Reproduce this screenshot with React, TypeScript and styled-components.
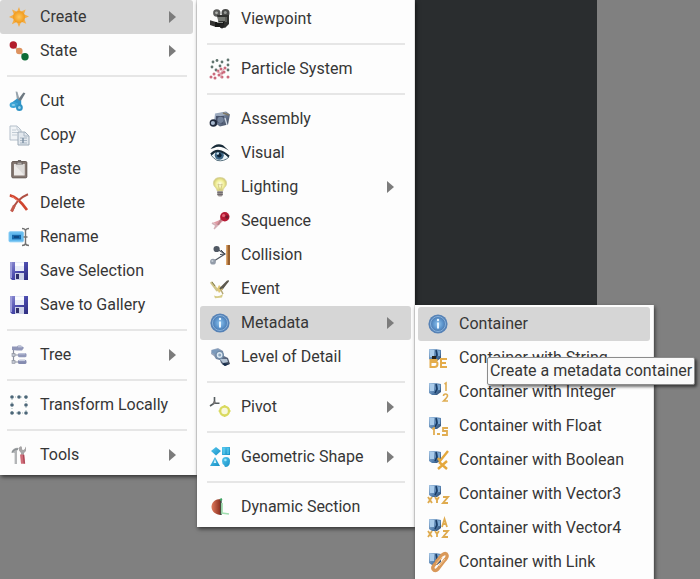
import React from "react";
import styled, { createGlobalStyle, css } from "styled-components";

const GlobalStyle = createGlobalStyle`
  *, *::before, *::after { box-sizing: border-box; }
  body {
    margin: 0;
    background: #808080;
    font-family: Roboto, "Liberation Sans", sans-serif;
    color: #363636;
  }
`;

const Desktop = styled.main`
  position: relative;
  display: flex;
  align-items: flex-start;
  height: 100vh;
  overflow: hidden;
  background: #808080;
`;

const Viewport = styled.div`
  position: absolute;
  top: 0;
  left: 0;
  width: 597px;
  height: 306px;
  background: #2a2d2f;
`;

const MenuPanel = styled.div<{ $edge?: boolean; $level: number }>`
  position: relative;
  z-index: ${(p) => p.$level};
  flex: none;
  display: flex;
  flex-direction: column;
  min-width: ${(p) => (p.$edge ? 197 : p.$level === 2 ? 218 : 239)}px;
  padding: ${(p) => (p.$edge ? "0 3px 3px 0" : "2px 3px 3px")};
  margin-top: ${(p) => (p.$level === 3 ? 305 : 0)}px;
  background: #fdfdfd;
  border-right: 1px solid #e4e4e4;
  box-shadow: 1px 2px 4px rgba(0, 0, 0, 0.6);
`;

const Item = styled.button<{ $active?: boolean; $edge?: boolean }>`
  display: flex;
  align-items: center;
  gap: 11px;
  width: 100%;
  height: 34px;
  padding: 0 17px 0 ${(p) => (p.$edge ? 9 : 10)}px;
  border: 0;
  border-radius: 3px;
  background: transparent;
  color: inherit;
  font: inherit;
  font-size: 16px;
  line-height: 20px;
  text-align: left;
  white-space: nowrap;
  ${(p) =>
    p.$active &&
    css`
      background: #d6d6d6;
    `}
`;

const Label = styled.span`
  flex: 1;
`;

const Glyph = styled.svg`
  flex: none;
  width: 20px;
  height: 20px;
  overflow: visible;
`;

const Arrow = styled.svg`
  flex: none;
  width: 7px;
  height: 12px;
  fill: #7c7c7c;
`;

const Divider = styled.hr`
  width: auto;
  height: 2px;
  margin: 7px 6px 7px 7px;
  border: 0;
  background: #e6e6e6;
`;

const ItemWrap = styled.div`
  position: relative;
`;

const Tooltip = styled.div`
  position: absolute;
  z-index: 5;
  top: 50px;
  left: 69px;
  padding: 3px 2px;
  border: 1px solid #8c8c8c;
  border-radius: 2px;
  background: #fafafa;
  box-shadow: 2px 2px 3px rgba(0, 0, 0, 0.55);
  font-size: 16px;
  line-height: 20px;
  white-space: nowrap;
`;

const Gradients = styled.svg`
  position: absolute;
  width: 0;
  height: 0;
`;

function GradientDefs() {
  return (
    <Gradients aria-hidden="true">
      <defs>
        <radialGradient id="sun">
          <stop offset="0" stopColor="#ffc75c" />
          <stop offset="1" stopColor="#f09a1c" />
        </radialGradient>
        <linearGradient id="disk" x1="0" y1="0" x2="1" y2="1">
          <stop offset="0" stopColor="#8f8fd4" />
          <stop offset="0.5" stopColor="#4a4aac" />
          <stop offset="1" stopColor="#2c2c7c" />
        </linearGradient>
        <linearGradient id="steel" x1="0" y1="0" x2="1" y2="1">
          <stop offset="0" stopColor="#b9c6da" />
          <stop offset="0.5" stopColor="#6d7c96" />
          <stop offset="1" stopColor="#353e50" />
        </linearGradient>
        <linearGradient id="tag" x1="0" y1="0" x2="1" y2="1">
          <stop offset="0" stopColor="#a5c5e4" />
          <stop offset="0.6" stopColor="#547fae" />
          <stop offset="1" stopColor="#233e60" />
        </linearGradient>
        <radialGradient id="info">
          <stop offset="0" stopColor="#8fc4ee" />
          <stop offset="0.65" stopColor="#5c94cc" />
          <stop offset="1" stopColor="#4b78ad" />
        </radialGradient>
        <linearGradient id="cyan" x1="0" y1="0" x2="1" y2="1">
          <stop offset="0" stopColor="#57c8f0" />
          <stop offset="1" stopColor="#168fc4" />
        </linearGradient>
        <linearGradient id="dome" x1="0" y1="0" x2="1" y2="0">
          <stop offset="0" stopColor="#e07a5c" />
          <stop offset="1" stopColor="#852a1c" />
        </linearGradient>
        <radialGradient id="bulb">
          <stop offset="0" stopColor="#fffff0" />
          <stop offset="0.6" stopColor="#f2f09a" />
          <stop offset="1" stopColor="#cfc774" />
        </radialGradient>
      </defs>
    </Gradients>
  );
}

const floppy = (
  <>
    <path d="M1 1h18v18H3l-2-2z" fill="url(#disk)" />
    <path d="M6 1h9v9H6z" fill="#e8ecf8" />
    <path d="M6 2h9v3H6z" fill="#fbfcff" />
    <path d="M6 12h9v7H6z" fill="#cdd2e8" />
    <path d="M7 13h3v5H7z" fill="#30306c" />
    <path d="M1 1h2v16H1z" fill="#9c9cda" />
  </>
);

const info = (
  <>
    <circle cx="10" cy="10" r="9.6" fill="#5682b6" />
    <circle cx="10" cy="10" r="7.5" fill="url(#info)" stroke="#86b1dc" strokeWidth="1" />
    <circle cx="10" cy="6" r="1.2" fill="#e8f5ff" />
    <path d="M9 8.6h2v5.8H9z" fill="#e8f5ff" />
  </>
);

const tag = (
  <>
    <path d="M1 1h7l5 1v8l-4 3H4l-3-2z" fill="url(#tag)" />
    <path d="M2 2h4v7H2z" fill="#a9cbea" />
    <path d="M8 2l1 5-2 4" stroke="#183c66" strokeWidth="1.6" fill="none" />
    <path d="M10 3h2v5h-2z" fill="#7aa7d2" />
  </>
);

const icons: Record<string, React.ReactNode> = {
  sun: (
    <>
      <path
        d="M10 0l1.7 4.7L16.6 2.4l-1.6 4.8L20 9.6l-4.8 1.9 2 5.3-5-2.1L10 20l-2.1-5-5 2.2 2-5.3L0 10l4.9-2.4L3 2.6l5 2.1z"
        fill="#f3ad48"
      />
      <circle cx="10" cy="10" r="6" fill="url(#sun)" />
    </>
  ),
  state: (
    <>
      <path d="M4 4l12 12" stroke="#c9b8a0" strokeWidth="2" />
      <circle cx="4.3" cy="4" r="3.7" fill="#b21d2b" />
      <circle cx="10.3" cy="10" r="3.3" fill="#dd9360" />
      <circle cx="16" cy="15.8" r="3.7" fill="#0d6b36" />
    </>
  ),
  cut: (
    <>
      <path d="M6.6 0.5l1.8 0.2 2.6 9-2.6 1.6z" fill="#98a4ad" />
      <path d="M16.4 2.2l-2-.6L8 10l2.8 1.8z" fill="#6e7982" />
      <path d="M9.4 9L4 13M10.2 9.5v6" stroke="#2f95c9" strokeWidth="4" />
      <ellipse cx="4.4" cy="14" rx="2.8" ry="2" fill="#8ccdea" stroke="#3ba5d6" strokeWidth="2" />
      <ellipse cx="10.4" cy="16.6" rx="2.4" ry="2.5" fill="#98d3ec" stroke="#2e93c5" strokeWidth="2" />
    </>
  ),
  copy: (
    <>
      <path d="M1 1h7l4 4v10H1z" fill="#f1f4f7" stroke="#b4bfca" />
      <path d="M3 5h4M3 7.5h6M3 10h5M8 1v4h4" stroke="#c2ccd5" fill="none" />
      <path d="M9 7h7l4 4v9H9z" fill="#e2e8ee" stroke="#9caab7" />
      <path d="M15 7v4h5M11 13h7M11 15.5h7M11 18h7" stroke="#aab7c4" fill="none" />
      <path d="M14 13v5" stroke="#7e92a5" strokeWidth="1.5" />
    </>
  ),
  paste: (
    <>
      <rect x="2.8" y="2.6" width="15" height="16.2" rx="1" fill="#857872" stroke="#60544f" />
      <path d="M5 5h10.5v11.5H5z" fill="#edebe9" />
      <path d="M5 5l10.5 11.5V5z" fill="#dcdad8" />
      <path d="M7 3.5h1.5L9 1h3l.5 2.5H14v2H7z" fill="#6d6664" />
      <path d="M8.5 3.7h4v1h-4z" fill="#c9c4c0" />
    </>
  ),
  remove: (
    <>
      <path d="M.8 2.4C6 3.2 13 10 18 17" stroke="#d0452f" strokeWidth="2.7" fill="none" />
      <path d="M19 1.2C12 4 5.5 10 3 18.4" stroke="#b05044" strokeWidth="2" fill="none" />
      <path d="M3 3.4l7 5" stroke="#f17562" strokeWidth="1" />
      <path d="M2.4 18.5l3-6" stroke="#c45a4c" strokeWidth="2.8" />
    </>
  ),
  rename: (
    <>
      <rect x="0" y="4.8" width="14.4" height="10" rx="1" fill="#62b9ee" stroke="#83cbf5" />
      <path d="M3 7.8h9v4.6H3z" fill="#1668aa" />
      <path d="M5 10h5" stroke="#0b3f78" strokeWidth="1.5" />
      <path d="M13 1.5q3 0 3.5 2Q17 1.5 20 1.5M13 18.5q3 0 3.5-2 .5 2 3.5 2M16.5 3v14M14.5 10h4" stroke="#737373" strokeWidth="1.4" fill="none" />
    </>
  ),
  save: floppy,
  tree: (
    <>
      <path d="M4.5 4v13h8M4.5 10h8M5 4h6" stroke="#8b8fa0" strokeWidth="1.2" fill="none" />
      <path d="M3 1.5h5L9 .5h3l3 2.3-2 2.7H8L3 5z" fill="#9096b8" />
      <rect x="9" y="8" width="8.5" height="4.3" rx="1.6" fill="#9198ba" />
      <rect x="9" y="14.8" width="8.5" height="4.2" rx="1.6" fill="#858cb0" />
      <path d="M10 8.8h6M10 15.6h6M9 1.8h4" stroke="#cfd4e5" />
      <rect x="3" y="8.6" width="3" height="2.8" fill="#c2c7d2" stroke="#888c98" strokeWidth=".6" />
      <rect x="3" y="15.5" width="3" height="2.8" fill="#c2c7d2" stroke="#888c98" strokeWidth=".6" />
    </>
  ),
  transform: (
    <g fill="#4c6678">
      <path d="M3 2h14v16H3z" fill="none" stroke="#9fb8b8" strokeDasharray="1 2" />
      {[3, 10, 17].map((x) =>
        [2, 10, 18].map((y) =>
          x === 10 && y === 10 ? null : <circle key={`${x}-${y}`} cx={x} cy={y} r="1.8" />
        )
      )}
    </g>
  ),
  tools: (
    <>
      <path d="M2.5 7.4Q4 2 10 3l-2 3v13H5.6V8z" fill="#b3b5b7" />
      <path d="M3 7.5Q5 4 9 4" stroke="#8c9194" strokeWidth="1.4" fill="none" />
      <path d="M10 5.5V2.5L12 1l1 1.5v2l1.5.5L16 3.8V1.5L17 3v3L15 8v4h-3V8z" fill="#a7a5a6" />
      <path d="M11 9.5h4.2l1 9.3H12z" fill="#d06c78" />
      <path d="M14.5 10l.8 8.5" stroke="#a74555" strokeWidth="1.2" />
    </>
  ),
  camera: (
    <>
      <circle cx="6.8" cy="4" r="3.7" fill="#5a5b5a" />
      <circle cx="15.5" cy="4" r="4" fill="#494a49" />
      <circle cx="6.5" cy="3.8" r="1.4" fill="#b0b2ae" />
      <circle cx="15.3" cy="3.6" r="1.5" fill="#959895" />
      <path d="M7 6h12v9l-4 4-6-3z" fill="#30312f" />
      <path d="M8 8h7v4H8z" fill="#777a75" />
      <path d="M0 11.2l6 1.7v5L0 16z" fill="#353534" />
      <path d="M5 13h9v5H5z" fill="#171817" />
      <path d="M7 13.5h6M16 8v5" stroke="#898c88" />
      <circle cx="12" cy="17" r="2.4" fill="#242424" />
    </>
  ),
  particles: (
    <>
      {[
        [3, 3], [7, 1.5], [12, 3], [18, 1], [10, 7], [18, 6], [2, 8], [6, 11], [18, 11],
      ].map(([x, y]) => <circle key={`${x}-${y}`} cx={x} cy={y} r="1.4" fill="#60746e" />)}
      {[
        [8, 12], [11, 10], [14, 13], [4, 15], [9, 16], [12, 18], [18, 18], [5, 19], [1, 18], [15, 9], [12, 14],
      ].map(([x, y]) => <circle key={`${x}-${y}`} cx={x} cy={y} r="1.5" fill="#cc6a7c" />)}
      <path d="M11 19V14l3-4M11 15L7 12" stroke="#d997a4" fill="none" />
    </>
  ),
  assembly: (
    <>
      <path d="M5 4.5l11-2 4 3-2 10-8 2-6-4z" fill="url(#steel)" />
      <path d="M5 5l10-1.7 3 2-8 2z" fill="#9eabbd" />
      <path d="M6 7h8l-1 8-7-2z" fill="#46516a" />
      <circle cx="10.5" cy="10.8" r="3.1" fill="#75849c" />
      <circle cx="3.4" cy="14" r="3.8" fill="#202a3d" />
      <circle cx="2.9" cy="14" r="2.1" fill="#a8b9cf" />
      <path d="M15 9l2 7" stroke="#d0d9e5" strokeWidth="1.3" />
      <path d="M13 4l6 2" stroke="#7e7764" strokeWidth="1.6" />
    </>
  ),
  eye: (
    <>
      <path d="M.5 6Q6-.8 13 2.2l6 5.5Q10 1.5 4 5z" fill="#182b38" />
      <path d="M1 12q7-8.5 18 2-5 5-12 3.4Q3 15 1 12z" fill="#e9f2f6" stroke="#5b7482" strokeWidth="1" />
      <circle cx="9.3" cy="12.2" r="4.5" fill="#3d6787" />
      <circle cx="9.3" cy="12.2" r="2.3" fill="#0d2336" />
      <circle cx="7.8" cy="10.5" r="1.2" fill="#cbe4f3" />
      <path d="M1 11.5q7-8 18 2" stroke="#182b38" strokeWidth="2.2" fill="none" />
    </>
  ),
  bulb: (
    <>
      <path d="M10 .5C5 .5 3 4 3.5 7.3 4 10 7 11 7.2 14h5.6c.2-3 3.2-4 3.7-6.7C17 4 15 .5 10 .5z" fill="url(#bulb)" stroke="#d8d39d" strokeWidth=".8" />
      <path d="M8 7l1.5 6M12.2 7l-1.5 6M8 7q2 2 4.2 0" stroke="#c9bf80" strokeWidth=".8" fill="none" />
      <path d="M7.3 14h5.5v4l-1.3 1.6H8.7L7.3 18z" fill="#9e9895" />
      <path d="M7.3 15.7h5.5M7.3 17.6h5.5" stroke="#69646a" />
    </>
  ),
  sequence: (
    <>
      <path d="M12 8L2.5 12l3 .8L4 18l9-8z" fill="#df9ba4" />
      <path d="M2 12l5 3-3 3" stroke="#d1b2b8" strokeWidth="1.5" fill="none" />
      <path d="M12 7l-4 7" stroke="#b98189" strokeWidth="2" />
      <circle cx="14.8" cy="5.7" r="4.7" fill="#b51a34" />
      <circle cx="13.6" cy="4.5" r="1.6" fill="#e26376" />
      <circle cx="17" cy="6" r="1.7" fill="#731b30" />
    </>
  ),
  collision: (
    <>
      <path d="M16 0h4v20h-4z" fill="#98602f" />
      <path d="M16 0h1.5v20H16z" fill="#dda66b" />
      <path d="M7 4l8 5-11 7" stroke="#505761" strokeWidth="1.2" fill="none" />
      <path d="M11 5l4 4-5 .5" stroke="#434b56" fill="none" />
      <circle cx="6.6" cy="4" r="3.1" fill="#505863" />
      <circle cx="3" cy="16.7" r="2.9" fill="#939ca9" />
      <circle cx="2.4" cy="16" r="1.1" fill="#c3ccd4" />
    </>
  ),
  event: (
    <>
      <path d="M1 3l6 8 4-1" stroke="#cfc489" strokeWidth="2.8" fill="none" />
      <path d="M2 3l3 4" stroke="#807a51" strokeWidth="1" />
      <path d="M18.5 1l-7 7-4 3 5-.2L19 2z" fill="#59564a" />
      <path d="M7 10l2-4 4 4-4 4z" fill="#dfc878" />
      <path d="M18 2l-8 8" stroke="#5d5a50" strokeWidth="2" />
      <path d="M11 11l2 4" stroke="#b5a878" strokeWidth="1.6" />
      <path d="M4 16.5q4 2 9-1.5l-1 3.5-7 .8z" fill="#d6cc88" />
    </>
  ),
  info,
  lod: (
    <>
      <path d="M1 3l7-2 5 3 1 5 4 2 2 6-5 2-4-3-1-3-4-1-2-3-3-2z" fill="url(#steel)" />
      <path d="M2 3l6-1 3 3-4 3-5-2z" fill="#7c9abb" />
      <circle cx="9.6" cy="8" r="3.6" fill="#dce8f2" stroke="#6f8ba8" strokeWidth="1.4" />
      <circle cx="9.7" cy="8" r="1.5" fill="#8ba6c0" />
      <path d="M10 12l7 0 1 3-5 1z" fill="#b4c4d5" />
      <path d="M14 16l5 1-4 2-3-2z" fill="#172e4b" />
    </>
  ),
  pivot: (
    <>
      <path d="M4.5 0v6L0 9M4.5 6l5 .2" stroke="#555c5f" strokeWidth="1.6" fill="none" />
      <circle cx="4.3" cy="5.7" r="1.4" fill="#7a7778" />
      <circle cx="14.6" cy="14" r="4.4" fill="#f8f8dc" stroke="#dada5f" strokeWidth="2.3" />
      <path d="M14.6 8v2M14.6 18v2M8.6 14h2M18.6 14h2" stroke="#d8d95d" strokeWidth="1.7" />
    </>
  ),
  shapes: (
    <g fill="url(#cyan)">
      <path d="M6 0l5 4-5 4.5L1 4z" />
      <path d="M12 0h8v8h-8z" />
      <path d="M5 10l5 9H0z" />
      <path d="M5 12l1.3 4H3.6z" fill="#d2f2fc" />
      <path d="M16 10a4 4 0 0 1 4 4q0 6-5 6l-1-2q-2-1-2-4a4 4 0 0 1 4-4z" />
      <path d="M14 1v6M18 1v6" stroke="#65d5f3" />
      <circle cx="15.4" cy="13" r="1.3" fill="#9be7fa" />
    </g>
  ),
  section: (
    <>
      <path d="M11 2v16C4.7 17.5 1.5 14 1.5 9.8 1.5 5.5 5 2 11 2z" fill="url(#dome)" />
      <path d="M11 2v16" stroke="#315348" strokeWidth="1.4" />
      <path d="M12 6v10l7 1" stroke="#a0dfb0" strokeWidth="1.7" fill="none" />
      <path d="M12 2l-2 1" stroke="#40a363" strokeWidth="2" />
    </>
  ),
  string: (
    <>
      {tag}
      <path d="M4 8h4v3H4z" fill="#27231b" />
      <path d="M2.5 12h6v2h-6zm0 0v7h4q3 0 3-3t-3-3M19 11h-6v8h6M13 15h5" fill="none" stroke="#e4ac4b" strokeWidth="2" />
    </>
  ),
  integer: (
    <>
      {tag}
      <path d="M16.5 2l1.5-1v8M15.5 14q0-2 2-2t2 2q0 1-4 5h4.5" fill="none" stroke="#dfad52" strokeWidth="1.6" />
    </>
  ),
  float: (
    <>
      {tag}
      <path d="M4 13l2-1v7M9 18h3M20 12h-5v3h4v4h-5" fill="none" stroke="#e1ad52" strokeWidth="1.8" />
    </>
  ),
  boolean: (
    <>
      {tag}
      <path d="M10 8l2 3 8-10M11 12l8 7M19 11l-9 8" fill="none" stroke="#e4a83d" strokeWidth="2.4" />
    </>
  ),
  vector3: (
    <>
      {tag}
      <path d="M0 13l4 6M4 13l-4 6M7 13l2 3 2-3M9 16v3M15 13h5l-5 6h5" fill="none" stroke="#dfab4f" strokeWidth="1.9" />
    </>
  ),
  vector4: (
    <>
      {tag}
      <path d="M0 13l4 6M4 13l-4 6M7 13l2 3 2-3M9 16v3M15 13h5l-5 6h5M14 9l2.5-8L19 9M15 6h3" fill="none" stroke="#dfab4f" strokeWidth="1.8" />
    </>
  ),
  link: (
    <>
      {tag}
      <path d="M8 10l6-7q4-3 5 0 1 2-3 6l-6 8q-3 3-5 0-1-2 2-5l6-7" fill="none" stroke="#d99858" strokeWidth="3.4" />
      <path d="M8 12l7-8M11 14l6-7" stroke="#f6c995" strokeWidth="1" />
    </>
  ),
};

interface Entry {
  icon: string;
  label: string;
  submenu?: boolean;
  active?: boolean;
  tip?: string;
}

const mainMenu: Entry[][] = [
  [
    { icon: "sun", label: "Create", submenu: true, active: true },
    { icon: "state", label: "State", submenu: true },
  ],
  [
    { icon: "cut", label: "Cut" },
    { icon: "copy", label: "Copy" },
    { icon: "paste", label: "Paste" },
    { icon: "remove", label: "Delete" },
    { icon: "rename", label: "Rename" },
    { icon: "save", label: "Save Selection" },
    { icon: "save", label: "Save to Gallery" },
  ],
  [{ icon: "tree", label: "Tree", submenu: true }],
  [{ icon: "transform", label: "Transform Locally" }],
  [{ icon: "tools", label: "Tools", submenu: true }],
];

const createMenu: Entry[][] = [
  [{ icon: "camera", label: "Viewpoint" }],
  [{ icon: "particles", label: "Particle System" }],
  [
    { icon: "assembly", label: "Assembly" },
    { icon: "eye", label: "Visual" },
    { icon: "bulb", label: "Lighting", submenu: true },
    { icon: "sequence", label: "Sequence" },
    { icon: "collision", label: "Collision" },
    { icon: "event", label: "Event" },
    { icon: "info", label: "Metadata", submenu: true, active: true },
    { icon: "lod", label: "Level of Detail" },
  ],
  [{ icon: "pivot", label: "Pivot", submenu: true }],
  [{ icon: "shapes", label: "Geometric Shape", submenu: true }],
  [{ icon: "section", label: "Dynamic Section" }],
];

const metadataMenu: Entry[][] = [
  [
    { icon: "info", label: "Container", active: true, tip: "Create a metadata container" },
    { icon: "string", label: "Container with String" },
    { icon: "integer", label: "Container with Integer" },
    { icon: "float", label: "Container with Float" },
    { icon: "boolean", label: "Container with Boolean" },
    { icon: "vector3", label: "Container with Vector3" },
    { icon: "vector4", label: "Container with Vector4" },
    { icon: "link", label: "Container with Link" },
  ],
];

function MenuEntry({ entry, edge }: { entry: Entry; edge: boolean }) {
  const tipId = entry.tip ? "container-tip" : undefined;
  return (
    <ItemWrap role="none">
      <Item
        type="button"
        role="menuitem"
        $active={entry.active}
        $edge={edge}
        aria-haspopup={entry.submenu ? "menu" : undefined}
        aria-expanded={entry.submenu ? Boolean(entry.active) : undefined}
        aria-describedby={tipId}
      >
        <Glyph viewBox="0 0 20 20" aria-hidden="true">
          {icons[entry.icon]}
        </Glyph>
        <Label>{entry.label}</Label>
        {entry.submenu && (
          <Arrow viewBox="0 0 7 12" aria-hidden="true">
            <path d="M0 0l7 6-7 6z" />
          </Arrow>
        )}
      </Item>
      {entry.tip && (
        <Tooltip role="tooltip" id={tipId}>
          {entry.tip}
        </Tooltip>
      )}
    </ItemWrap>
  );
}

function Menu({ name, groups, level }: { name: string; groups: Entry[][]; level: number }) {
  const edge = level === 1;
  return (
    <MenuPanel role="menu" aria-label={name} $edge={edge} $level={level}>
      {groups.map((group, index) => (
        <React.Fragment key={group[0].label}>
          {index > 0 && <Divider />}
          {group.map((entry) => (
            <MenuEntry key={entry.label} entry={entry} edge={edge} />
          ))}
        </React.Fragment>
      ))}
    </MenuPanel>
  );
}

export default function App() {
  return (
    <>
      <GlobalStyle />
      <Desktop>
        <GradientDefs />
        <Viewport />
        <Menu name="Edit" groups={mainMenu} level={1} />
        <Menu name="Create" groups={createMenu} level={2} />
        <Menu name="Metadata" groups={metadataMenu} level={3} />
      </Desktop>
    </>
  );
}
